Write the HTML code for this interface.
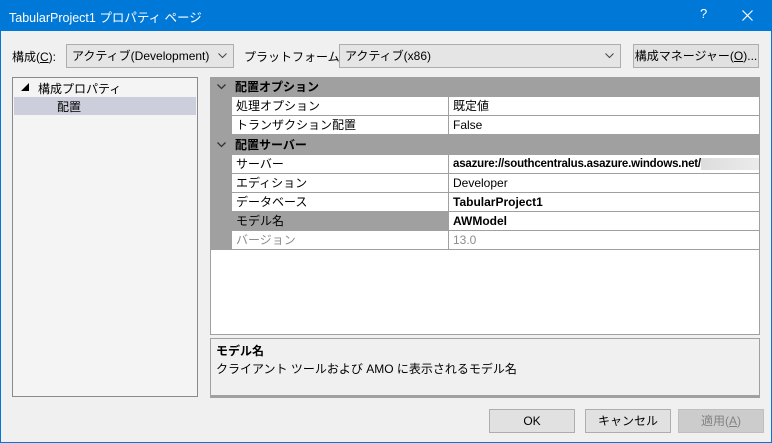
<!DOCTYPE html>
<html><head><meta charset="utf-8"><style>
*{margin:0;padding:0;box-sizing:border-box}
body{width:772px;height:443px;overflow:hidden;background:#f0f0f0;font-family:"Liberation Sans","Noto Sans CJK JP",sans-serif;font-size:12px;color:#000;position:relative}
.abs{position:absolute}
.win{position:absolute;left:0;top:0;width:772px;height:443px;border:1px solid #0078d7;border-top:none}
.title{position:absolute;left:0;top:0;width:772px;height:31px;background:#0078d7;color:#fff;font-size:12.5px}
.combo{position:absolute;height:24px;border:1px solid #adadad;background:#e5e5e5;line-height:22px;padding-left:5px}
.combo svg{position:absolute;right:6px;top:8px}
.btn{position:absolute;height:24px;border:1px solid #adadad;background:#e1e1e1;text-align:center;line-height:22px}
.row{position:absolute;left:0;width:549px;height:19px;border-bottom:1px solid #a0a0a0;line-height:18px}
.row .n{position:absolute;left:21px;width:216px;height:18px;padding-left:4px;background:#fff}
.row .v{position:absolute;left:237px;width:312px;height:18px;padding-left:4px;background:#fff;border-left:1px solid #a0a0a0;white-space:nowrap;overflow:hidden}
.cat{position:absolute;left:0;width:549px;height:20px;background:#a0a0a0;line-height:20px;font-weight:bold}
.cat svg{position:absolute;left:6px;top:7px}
</style></head><body>
<div class="title"><span class="abs" style="left:9px;top:7px">TabularProject1 プロパティ ページ</span>
<span class="abs" style="left:700px;top:6px;font-size:13px">?</span>
<svg class="abs" style="left:742px;top:10px" width="11" height="11"><path d="M0.5 0.5L10.5 10.5M10.5 0.5L0.5 10.5" stroke="#fff" stroke-width="1.2"/></svg></div>
<div class="win"></div>

<span class="abs" style="left:12px;top:48px">構成(<u>C</u>):</span>
<div class="combo" style="left:66px;top:44px;width:168px">アクティブ(Development)<svg width="9" height="6"><path d="M0.5 0.5L4.5 4.5L8.5 0.5" fill="none" stroke="#444"/></svg></div>
<span class="abs" style="left:244px;top:48px">プラットフォーム(<u>P</u>):</span>
<div class="combo" style="left:339px;top:44px;width:282px">アクティブ(x86)<svg width="9" height="6"><path d="M0.5 0.5L4.5 4.5L8.5 0.5" fill="none" stroke="#444"/></svg></div>
<div class="btn" style="left:633px;top:44px;width:126px">構成マネージャー(<u>O</u>)...</div>

<div class="abs" style="left:12px;top:77px;width:186px;height:320px;border:1px solid #8a8a8a;background:#f4f4f4">
<span class="abs" style="left:8px;top:4px;font-size:8px">◢</span>
<span class="abs" style="left:25px;top:2px">構成プロパティ</span>
<div class="abs" style="left:1px;top:19px;width:182px;height:18px;background:#cccedb"></div>
<span class="abs" style="left:44px;top:20px">配置</span>
</div>

<div class="abs" style="left:210px;top:77px;width:550px;height:258px;border:1px solid #a0a0a0;border-top:none;background:#fff;overflow:hidden">
<div class="abs" style="left:0;top:0;width:21px;height:173px;background:#a0a0a0"></div>
<div class="cat" style="top:0"><svg width="9" height="6"><path d="M0.5 0.5L4.5 4.5L8.5 0.5" fill="none" stroke="#333" stroke-width="1.3"/></svg><span style="position:absolute;left:24px">配置オプション</span></div>
<div class="row" style="top:20px"><div class="n">処理オプション</div><div class="v">既定値</div></div>
<div class="row" style="top:39px"><div class="n">トランザクション配置</div><div class="v">False</div></div>
<div class="cat" style="top:58px"><svg width="9" height="6"><path d="M0.5 0.5L4.5 4.5L8.5 0.5" fill="none" stroke="#333" stroke-width="1.3"/></svg><span style="position:absolute;left:24px">配置サーバー</span></div>
<div class="row" style="top:78px"><div class="n">サーバー</div><div class="v" style="font-weight:bold;font-size:11.5px;letter-spacing:-0.2px">asazure://southcentralus.asazure.windows.net/<span style="display:inline-block;width:70px;height:12px;background:linear-gradient(90deg,#ddd,#eee);vertical-align:middle"></span></div></div>
<div class="row" style="top:97px"><div class="n">エディション</div><div class="v">Developer</div></div>
<div class="row" style="top:116px"><div class="n">データベース</div><div class="v" style="font-weight:bold">TabularProject1</div></div>
<div class="row" style="top:135px"><div class="n" style="background:#a0a0a0">モデル名</div><div class="v" style="font-weight:bold">AWModel</div></div>
<div class="row" style="top:154px;color:#8d8d8d"><div class="n">バージョン</div><div class="v">13.0</div></div>
</div>

<div class="abs" style="left:210px;top:338px;width:550px;height:60px;border:1px solid #a0a0a0;border-bottom:3px solid #a0a0a0;background:#f0f0f0">
<span class="abs" style="left:5px;top:3px;font-weight:bold">モデル名</span>
<span class="abs" style="left:5px;top:21px">クライアント ツールおよび AMO に表示されるモデル名</span>
</div>

<div class="btn" style="left:489px;top:409px;width:86px">OK</div>
<div class="btn" style="left:585px;top:409px;width:86px">キャンセル</div>
<div class="btn" style="left:678px;top:409px;width:86px;background:#cccccc;border-color:#bfbfbf;color:#838383">適用(<u>A</u>)</div>
</body></html>
